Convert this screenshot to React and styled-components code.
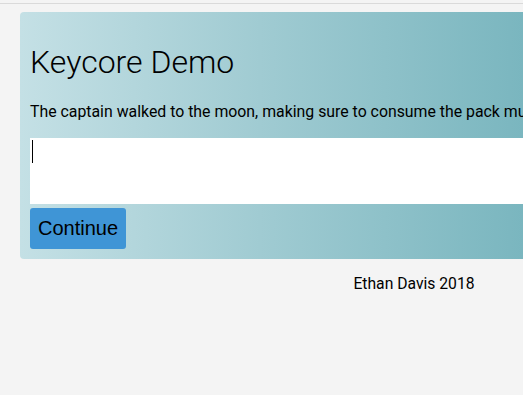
import React from 'react';
import styled, {createGlobalStyle} from 'styled-components';

const Global = createGlobalStyle`
  html, body {
    margin: 0;
    background: #f4f4f4;
    overflow: hidden;
  }
  body {
    font-family: Roboto, "Noto Sans", sans-serif;
    color: #000;
  }
`;

const Page = styled.div`
  width: 828px;
  padding-top: 3px;
`;

const TopRule = styled.div`
  border-top: 1px solid #dadada;
`;

const Card = styled.div`
  margin: 8px 0 0 20px;
  width: 788px;
  padding: 10px;
  box-sizing: border-box;
  border-radius: 4px;
  background: linear-gradient(to right, #c4e0e5 0px, #a0cbd2 240px, #7ab6bf 503px, #5a9ea8 788px);
`;

const Title = styled.h1`
  font-size: 32px;
  font-weight: 300;
  margin: 21px 0;
`;

const Prompt = styled.p`
  font-size: 15.85px;
  margin: 0 0 17px;
  white-space: nowrap;
`;

// the caret is drawn so it shows in a still picture
const AnswerBox = styled.div`
  position: relative;

  &::before {
    content: '';
    position: absolute;
    left: 2px;
    top: 2px;
    width: 1px;
    height: 23px;
    background: #000;
  }
`;

const Answer = styled.textarea`
  display: block;
  width: 100%;
  height: 66px;
  box-sizing: border-box;
  border: none;
  outline: none;
  resize: none;
  padding: 2px;
  font-family: "Liberation Sans", Arial, sans-serif;
  font-size: 20px;
  background: #fff;
  caret-color: transparent;
`;

const Button = styled.button`
  display: block;
  margin-top: 4px;
  height: 41px;
  padding: 0 8px;
  border: none;
  border-radius: 3px;
  background: #3f95d6;
  color: #000;
  font-family: "Liberation Sans", Arial, sans-serif;
  font-size: 20px;
  cursor: pointer;
`;

const Footer = styled.footer`
  text-align: center;
  font-size: 15.7px;
  margin-top: 15px;
`;

function App() {
  return (
    <Page>
      <Global />
      <TopRule />
      <Card>
        <Title>Keycore Demo</Title>
        <Prompt>The captain walked to the moon, making sure to consume the pack must be kept before the night.</Prompt>
        <AnswerBox>
          <Answer />
        </AnswerBox>
        <Button>Continue</Button>
      </Card>
      <Footer>Ethan Davis 2018</Footer>
    </Page>
  );
}

export default App;
